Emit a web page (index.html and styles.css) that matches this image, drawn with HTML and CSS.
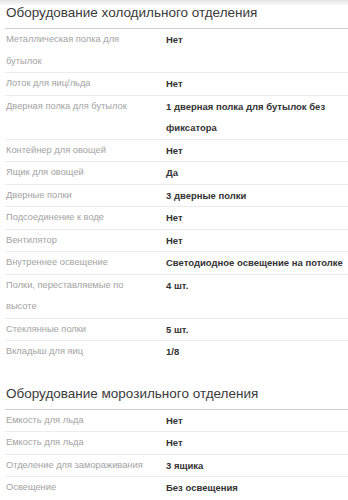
FILE: index.html
```html
<!DOCTYPE html>
<html lang="ru">
<head>
<meta charset="utf-8">
<link rel="stylesheet" href="styles.css">
</head>
<body>
<section class="group">
  <h2 class="group-title">Оборудование холодильного отделения</h2>
  <div class="specs">
    <div class="row"><div class="label">Металлическая полка для бутылок</div><div class="value">Нет</div></div>
    <div class="row"><div class="label">Лоток для яиц/льда</div><div class="value">Нет</div></div>
    <div class="row"><div class="label">Дверная полка для бутылок</div><div class="value">1 дверная полка для бутылок без фиксатора</div></div>
    <div class="row"><div class="label">Контейнер для овощей</div><div class="value">Нет</div></div>
    <div class="row"><div class="label">Ящик для овощей</div><div class="value">Да</div></div>
    <div class="row"><div class="label">Дверные полки</div><div class="value">3 дверные полки</div></div>
    <div class="row"><div class="label">Подсоединение к воде</div><div class="value">Нет</div></div>
    <div class="row"><div class="label">Вентилятор</div><div class="value">Нет</div></div>
    <div class="row"><div class="label">Внутреннее освещение</div><div class="value">Светодиодное освещение на потолке</div></div>
    <div class="row"><div class="label">Полки, переставляемые по высоте</div><div class="value">4 шт.</div></div>
    <div class="row"><div class="label">Стеклянные полки</div><div class="value">5 шт.</div></div>
    <div class="row"><div class="label">Вкладыш для яиц</div><div class="value">1/8</div></div>
  </div>
</section>
<section class="group">
  <h2 class="group-title">Оборудование морозильного отделения</h2>
  <div class="specs">
    <div class="row"><div class="label">Емкость для льда</div><div class="value">Нет</div></div>
    <div class="row"><div class="label">Емкость для льда</div><div class="value">Нет</div></div>
    <div class="row"><div class="label">Отделение для замораживания</div><div class="value">3 ящика</div></div>
    <div class="row"><div class="label">Освещение</div><div class="value">Без освещения</div></div>
  </div>
</section>
</body>
</html>
```
FILE: styles.css
```css
html, body {
  margin: 0;
  padding: 0;
}
body {
  padding: 3px 0 0 5px;
  background: #fff linear-gradient(#e4e4e4, #ffffff 6px) no-repeat;
  font-family: "Liberation Sans", Arial, sans-serif;
  color: #333;
}
.group + .group {
  margin-top: 21px;
}
.group-title {
  margin: 0;
  padding: 0 0 5px 1px;
  font-size: 13.5px;
  line-height: 20px;
  font-weight: normal;
  color: #3a3a3a;
  border-bottom: 1px solid #cfcfcf;
}
.row {
  display: grid;
  grid-template-columns: 161px 1fr;
  font-size: 9.3px;
  line-height: 21.5px;
}
.row + .row {
  border-top: 1px solid #ececec;
}
.label {
  padding: 0 14px 0 1px;
  color: #a3a3a3;
}
.value {
  font-size: 9.5px;
  font-weight: bold;
  color: #333;
  padding-right: 1px;
}
```
